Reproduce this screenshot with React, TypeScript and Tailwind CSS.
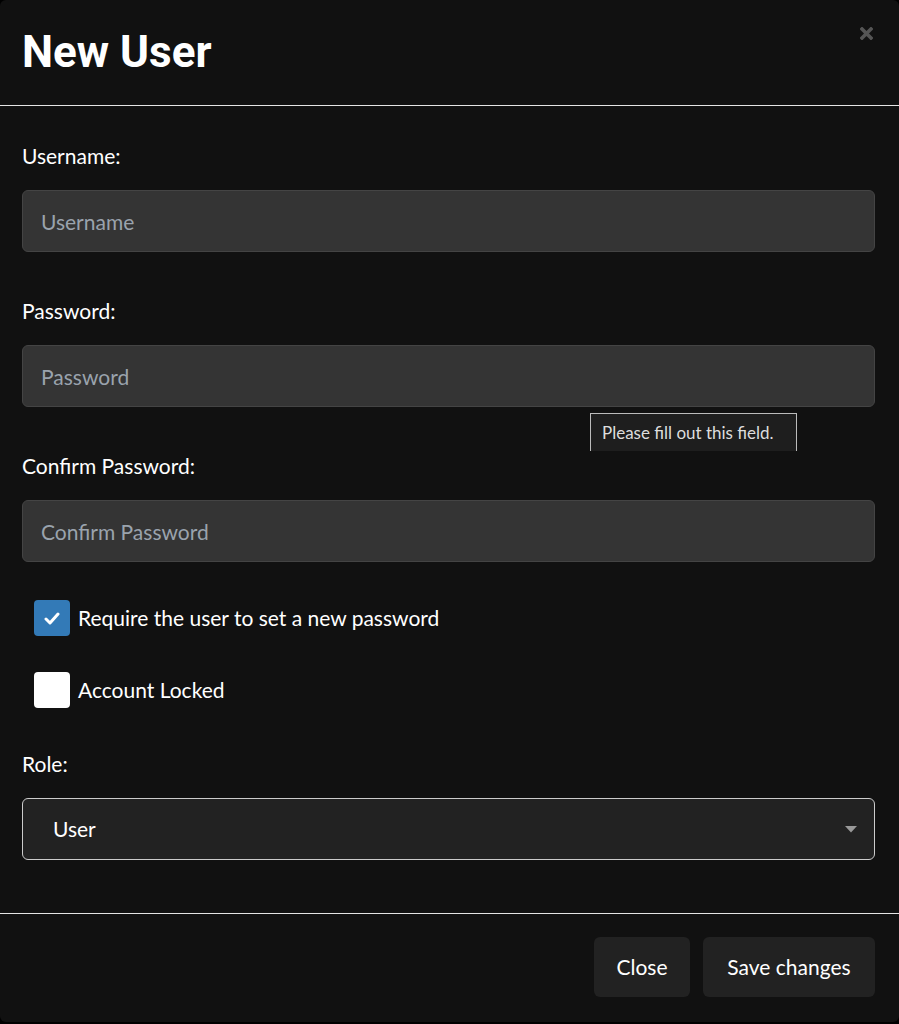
const body = "font-['Lato','Noto_Sans',sans-serif]";

const Field = ({ label, placeholder, first }: { label: string; placeholder: string; first?: boolean }) => (
    <div className={first ? "" : "mt-[45px]"}>
        <div className="text-[21px] leading-[28px] text-white">{label}</div>
        <input
            placeholder={placeholder}
            className="mt-[20px] w-full h-[62px] rounded-md border border-[#444] bg-[#343434] px-[18px] text-[21px] text-white placeholder:text-[#9aa3ad] outline-none"
        />
    </div>
);

const Check = ({ checked, label }: { checked?: boolean; label: string }) => (
    <label className="flex items-center ml-[12px] h-[36px]">
        <span
            className={
                checked
                    ? "w-[36px] h-[36px] rounded-[4px] bg-[#337ab7] flex items-center justify-center"
                    : "w-[36px] h-[36px] rounded-[4px] bg-white"
            }
        >
            {checked && (
                <svg width="16" height="13" viewBox="0 0 16 13">
                    <path d="M2 7l4 4 8-9" fill="none" stroke="white" strokeWidth="3" strokeLinecap="round" strokeLinejoin="round" />
                </svg>
            )}
        </span>
        <span className="ml-[8px] text-[21px] leading-[28px] text-white">{label}</span>
    </label>
);

export default function App() {
    return (
        <div className={"w-[899px] h-[1024px] bg-black " + body}>
            <div className="relative h-[1022px] bg-[#111] rounded-md flex flex-col">
                <div className="relative h-[106px] border-b border-[#e5e5e5] px-[22px] pt-[28px]">
                    <h1 className="font-['Roboto',sans-serif] font-bold text-[44px] leading-[48px] text-white">New User</h1>
                    <button className="absolute right-[26px] top-[27px]">
                        <svg width="13" height="13" viewBox="0 0 13 13">
                            <path d="M2 2l9 9M11 2l-9 9" stroke="#555" strokeWidth="3.6" strokeLinecap="square" />
                        </svg>
                    </button>
                </div>

                <div className="pl-[22px] pr-[24px] pt-[36px] pb-[53px] border-b border-[#e5e5e5]">
                    <Field first label="Username:" placeholder="Username" />
                    <Field label="Password:" placeholder="Password" />
                    <Field label="Confirm Password:" placeholder="Confirm Password" />

                    <div className="mt-[38px] flex flex-col gap-[36px]">
                        <Check checked label="Require the user to set a new password" />
                        <Check label="Account Locked" />
                    </div>

                    <div className="mt-[42px] text-[21px] leading-[28px] text-white">Role:</div>
                    <div className="mt-[20px] relative h-[62px] rounded-md border border-[#ccc] bg-[#222] flex items-center pl-[30px]">
                        <span className="text-[21px] text-white">User</span>
                        <svg className="absolute right-[17px] top-[27px]" width="12" height="7" viewBox="0 0 12 7">
                            <path d="M0 0h12L6 6.5z" fill="#999" />
                        </svg>
                    </div>
                </div>

                <div className="flex justify-end gap-[13px] pt-[23px] pr-[24px]">
                    <button className="h-[60px] w-[96px] rounded-md bg-[#222] text-[21px] text-white">Close</button>
                    <button className="h-[60px] w-[172px] rounded-md bg-[#222] text-[21px] text-white">Save changes</button>
                </div>

                <div className="absolute left-[590px] top-[413px] w-[207px] h-[38px] border-t border-l border-r border-[#bbb] bg-[#1e1e1e] pl-[11px] pt-[8px] text-[17px] leading-[22px] text-[#ddd]">
                    Please fill out this field.
                </div>
            </div>
        </div>
    );
}
